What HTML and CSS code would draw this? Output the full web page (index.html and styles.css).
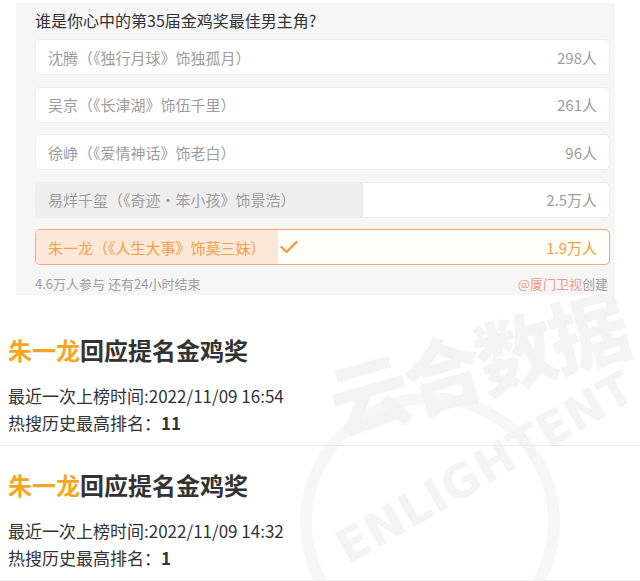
FILE: index.html
```html
<!DOCTYPE html>
<html lang="zh">
<head>
<meta charset="utf-8">
<link rel="stylesheet" href="styles.css">
</head>
<body>
<div class="page">
  <div class="watermark">
    <span class="wm-ring"></span>
    <span class="wm-cn">云合数据</span>
    <span class="wm-en">ENLIGHTENT</span>
  </div>
  <section class="poll">
    <div class="question">谁是你心中的第35届金鸡奖最佳男主角?</div>
    <div class="options">
      <div class="option"><span class="label">沈腾（《独行月球》饰独孤月）</span><span class="count">298人</span></div>
      <div class="option"><span class="label">吴京（《长津湖》饰伍千里）</span><span class="count">261人</span></div>
      <div class="option"><span class="label">徐峥（《爱情神话》饰老白）</span><span class="count">96人</span></div>
      <div class="option"><span class="fill" style="width:57%"></span><span class="label">易烊千玺（《奇迹•笨小孩》饰景浩）</span><span class="count">2.5万人</span></div>
      <div class="option chosen"><span class="fill" style="width:42.2%"></span><span class="label">朱一龙（《人生大事》饰莫三妹）</span><svg class="check" viewBox="0 0 18 14" width="18" height="14"><polyline points="1.5,7 6.5,12 16.5,2" fill="none" stroke="#f09a3a" stroke-width="2.4" stroke-linecap="round" stroke-linejoin="round"/></svg><span class="count">1.9万人</span></div>
    </div>
    <div class="poll-footer">
      <span>4.6万人参与 还有24小时结束</span>
      <span><span class="creator">@厦门卫视</span>创建</span>
    </div>
  </section>
  <section class="entry entry-first">
    <h2 class="title"><span class="hl">朱一龙</span>回应提名金鸡奖</h2>
    <p class="info">最近一次上榜时间:2022/11/09 16:54</p>
    <p class="info">热搜历史最高排名：<b>11</b></p>
  </section>
  <section class="entry">
    <h2 class="title"><span class="hl">朱一龙</span>回应提名金鸡奖</h2>
    <p class="info">最近一次上榜时间:2022/11/09 14:32</p>
    <p class="info">热搜历史最高排名：<b>1</b></p>
  </section>
</div>
</body>
</html>
```
FILE: styles.css
```css
html, body {
  margin: 0;
  padding: 0;
  background: #fff;
}
body {
  font-family: "Noto Sans CJK SC", "Noto Sans", sans-serif;
  color: #333;
  width: 640px;
  height: 581px;
  overflow: hidden;
}
.page {
  position: relative;
  width: 640px;
  height: 581px;
  overflow: hidden;
}
.watermark {
  position: absolute;
  inset: 0;
  pointer-events: none;
  z-index: 0;
}
.wm-cn {
  position: absolute;
  left: 330px;
  top: 362px;
  font-size: 80px;
  line-height: 80px;
  font-weight: 900;
  color: #f4f4f4;
  letter-spacing: -4px;
  transform: rotate(-16deg);
  transform-origin: left center;
  white-space: nowrap;
}
.wm-en {
  position: absolute;
  left: 340px;
  top: 528px;
  font-family: "DejaVu Sans", sans-serif;
  font-size: 46px;
  line-height: 46px;
  font-weight: 900;
  letter-spacing: 1px;
  color: #f4f4f4;
  transform: rotate(-30deg);
  transform-origin: left center;
  white-space: nowrap;
}
.wm-ring {
  position: absolute;
  left: 300px;
  top: 392px;
  width: 260px;
  height: 260px;
  border-radius: 50%;
  border: 12px solid #f7f7f7;
  box-sizing: border-box;
}
.poll {
  position: relative;
  z-index: 1;
  margin: 3px 25px 0 16px;
  background: #f6f6f6;
  padding: 5px 5px 1px 19px;
}
.question {
  font-size: 16px;
  line-height: 24px;
  color: #333;
  margin-bottom: 7px;
}
.options {
  display: flex;
  flex-direction: column;
  gap: 11.5px;
}
.option {
  position: relative;
  height: 36px;
  box-sizing: border-box;
  background: #fff;
  border: 1px solid #eeeeee;
  border-radius: 5px;
  display: flex;
  align-items: center;
  padding: 0 12px 0 12px;
  font-size: 15px;
  color: #9d9d9d;
  overflow: hidden;
}
.option .fill {
  position: absolute;
  left: 0;
  top: 0;
  bottom: 0;
  background: #efefef;
}
.option .label {
  position: relative;
  flex: none;
}
.option .count {
  position: relative;
  margin-left: auto;
}
.option.chosen {
  border-color: #f1a889;
  background: #fffdf7;
  color: #f0a246;
}
.option.chosen .fill {
  background: #fde7d9;
}
.option .check {
  position: relative;
  margin-left: 14px;
  flex: none;
}
.poll-footer {
  display: flex;
  justify-content: space-between;
  font-size: 13px;
  line-height: 20px;
  color: #a0a0a0;
  margin-top: 9px;
  padding-right: 2px;
}
.creator {
  color: #ec9a86;
}
.entry {
  position: relative;
  z-index: 1;
  padding: 23px 0 9px 8px;
  border-bottom: 1px solid #ececec;
}
.entry-first {
  margin-top: 16px;
}
.title {
  margin: 0 0 16px 0;
  font-size: 24px;
  line-height: 32px;
  font-weight: bold;
  color: #333;
}
.hl {
  color: #f6a623;
}
.info {
  margin: 0;
  font-size: 17px;
  line-height: 27px;
  color: #333;
}
.info b {
  font-weight: bold;
}
```
